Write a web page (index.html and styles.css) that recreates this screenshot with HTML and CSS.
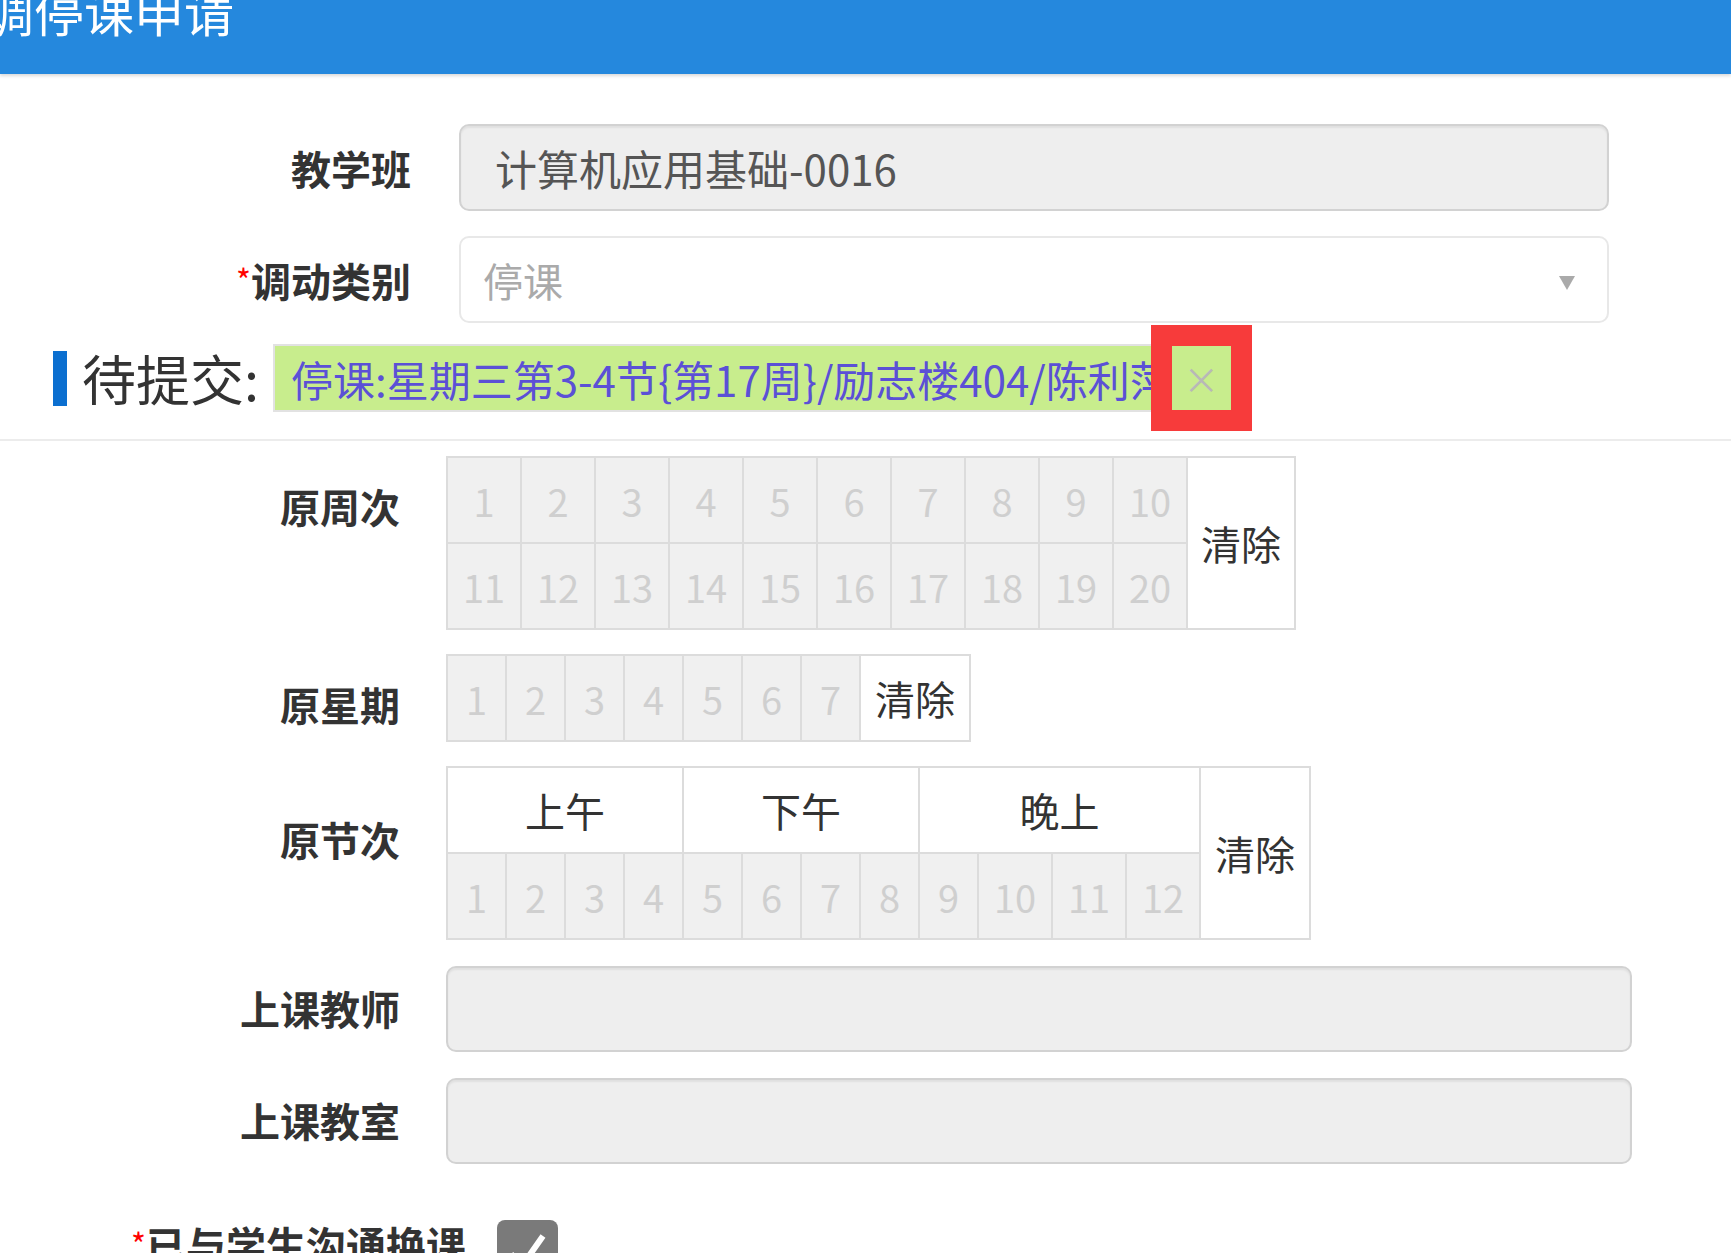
FILE: index.html
```html
<!DOCTYPE html>
<html lang="zh-CN">
<head>
    <meta charset="UTF-8">
    <title>调停课申请</title>
    <link rel="stylesheet" href="styles.css">
</head>
<body>
    <div class="topbar">
        <h1>调停课申请</h1>
    </div>

    <div class="form-top">
        <div class="row">
            <label class="label">教学班</label>
            <div class="field readonly">计算机应用基础-0016</div>
        </div>
        <div class="row">
            <label class="label"><span class="req">*</span>调动类别</label>
            <div class="field select">
                <span class="placeholder">停课</span>
                <span class="caret"></span>
            </div>
        </div>
        <div class="pending">
            <span class="pending-bar"></span>
            <span class="pending-title">待提交:</span>
            <span class="tag">
                <span class="tag-text">停课:星期三第3-4节{第17周}/励志楼404/陈利萍</span>
                <span class="tag-close">×</span>
            </span>
        </div>
    </div>

    <div class="form-bottom">
        <div class="row top">
            <label class="label">原周次</label>
            <table class="pick weeks">
                <tr>
                    <td>1</td><td>2</td><td>3</td><td>4</td><td>5</td>
                    <td>6</td><td>7</td><td>8</td><td>9</td><td>10</td>
                    <td class="clear" rowspan="2">清除</td>
                </tr>
                <tr>
                    <td>11</td><td>12</td><td>13</td><td>14</td><td>15</td>
                    <td>16</td><td>17</td><td>18</td><td>19</td><td>20</td>
                </tr>
            </table>
        </div>
        <div class="row top">
            <label class="label">原星期</label>
            <table class="pick days">
                <tr>
                    <td>1</td><td>2</td><td>3</td><td>4</td><td>5</td><td>6</td><td>7</td>
                    <td class="clear">清除</td>
                </tr>
            </table>
        </div>
        <div class="row top">
            <label class="label label-low">原节次</label>
            <table class="pick periods">
                <tr>
                    <td class="part" colspan="4">上午</td>
                    <td class="part" colspan="4">下午</td>
                    <td class="part" colspan="4">晚上</td>
                    <td class="clear" rowspan="2">清除</td>
                </tr>
                <tr>
                    <td>1</td><td>2</td><td>3</td><td>4</td>
                    <td>5</td><td>6</td><td>7</td><td>8</td>
                    <td>9</td><td class="wide">10</td><td class="wide">11</td><td class="wide">12</td>
                </tr>
            </table>
        </div>
        <div class="row">
            <label class="label">上课教师</label>
            <div class="field readonly wide-field"></div>
        </div>
        <div class="row">
            <label class="label">上课教室</label>
            <div class="field readonly wide-field"></div>
        </div>
        <div class="row check-row">
            <label class="label"><span class="req">*</span>已与学生沟通换课</label>
            <span class="checkbox">
                <svg width="61" height="61" viewBox="0 0 61 61">
                    <polyline points="14,34 25,46 46,16" fill="none" stroke="#fff" stroke-width="6"/>
                </svg>
            </span>
        </div>
    </div>
</body>
</html>
```

FILE: styles.css
```css
body {
    margin: 0;
    font-family: "Noto Sans CJK SC", "Noto Sans", sans-serif;
    color: #333;
    background-color: #fff;
    overflow: hidden;
}
.topbar {
    height: 74px;
    background-color: #2588dd;
    box-shadow: 0 2px 3px rgba(0, 0, 0, 0.15);
    overflow: hidden;
}
.topbar h1 {
    margin: -15px 0 0 -16px;
    font-size: 50px;
    font-weight: normal;
    line-height: 1;
    color: #fff;
}
.row {
    display: flex;
    align-items: center;
}
.row.top {
    align-items: flex-start;
}
.label {
    flex-shrink: 0;
    text-align: right;
    font-size: 40px;
    font-weight: bold;
    line-height: 48px;
    color: #333;
}
.req {
    color: #f00;
    font-size: 32px;
    font-weight: normal;
    vertical-align: 4px;
    line-height: 30px;
}

/* upper part */
.form-top {
    padding: 50px 0 27px;
    border-bottom: 2px solid #ececec;
}
.form-top .row {
    margin-bottom: 25px;
}
.form-top .label {
    width: 411px;
    margin-right: 48px;
}
.field {
    box-sizing: border-box;
    width: 1150px;
    height: 87px;
    border-radius: 10px;
    font-size: 40px;
    display: flex;
    align-items: center;
}
.readonly {
    background-color: #eee;
    border: 2px solid #d2d2d2;
    box-shadow: inset 0 2px 2px rgba(0, 0, 0, 0.06);
    padding-left: 34px;
    color: #555;
    font-size: 42px;
}
.select {
    background-color: #fff;
    border: 2px solid #e8e8e8;
    padding: 0 32px 0 22px;
    justify-content: space-between;
}
.placeholder {
    color: #aaa;
}
.caret {
    width: 0;
    height: 0;
    margin-top: 6px;
    border-left: 8px solid transparent;
    border-right: 8px solid transparent;
    border-top: 14px solid #aaa;
}
.pending {
    display: flex;
    align-items: center;
    padding-left: 53px;
    margin-top: -4px;
}
.pending-bar {
    width: 14px;
    height: 55px;
    background-color: #0b6fd0;
    margin-right: 15px;
}
.pending-title {
    font-size: 54px;
    line-height: 1;
    margin-right: 14px;
    color: #333;
}
.tag {
    display: flex;
    height: 68px;
    box-sizing: border-box;
    border: 2px solid #e2e2e2;
    background-color: #c8ed8d;
    padding-left: 16px;
}
.tag-text {
    align-self: center;
    color: #5b50d6;
    font-size: 42px;
    white-space: nowrap;
}
.tag-close {
    width: 59px;
    display: flex;
    align-items: center;
    justify-content: center;
    color: #b8b8b8;
    font-size: 36px;
    outline: 21px solid #f73b3b;
}

/* lower part */
.form-bottom {
    padding-top: 15px;
    display: flex;
    flex-direction: column;
    gap: 24px;
}
.form-bottom .label {
    width: 400px;
    margin-right: 46px;
}
.form-bottom .row.top .label {
    padding-top: 26px;
}
.form-bottom .row.top .label-low {
    padding-top: 49px;
}
.pick {
    border-collapse: collapse;
    border: 2px solid #dcdcdc;
}
.pick td {
    border: 2px solid #dcdcdc;
    padding: 0;
    height: 84px;
    text-align: center;
    background-color: #f0f0f0;
    color: #cfcfcf;
    font-size: 38px;
}
.weeks td {
    width: 72px;
}
.days td,
.periods td {
    width: 57px;
}
.periods td.wide {
    width: 72px;
}
.pick td.part {
    width: auto;
    background-color: #fff;
    color: #333;
    font-size: 40px;
}
.pick td.clear {
    width: 106px;
    background-color: #fff;
    color: #333;
    font-size: 40px;
}
.days td.clear,
.periods td.clear {
    width: 108px;
}
.wide-field {
    width: 1186px;
    height: 86px;
}
.wide-field + .wide-field,
.row + .row .wide-field {
    margin-top: 2px;
}
.check-row {
    margin-top: 32px;
    align-items: flex-start;
}
.form-bottom .check-row .label {
    width: 466px;
    margin-right: 31px;
}
.checkbox {
    width: 61px;
    height: 61px;
    border-radius: 8px;
    background-color: #7a7a7a;
    display: block;
}
.checkbox svg {
    display: block;
}
```
